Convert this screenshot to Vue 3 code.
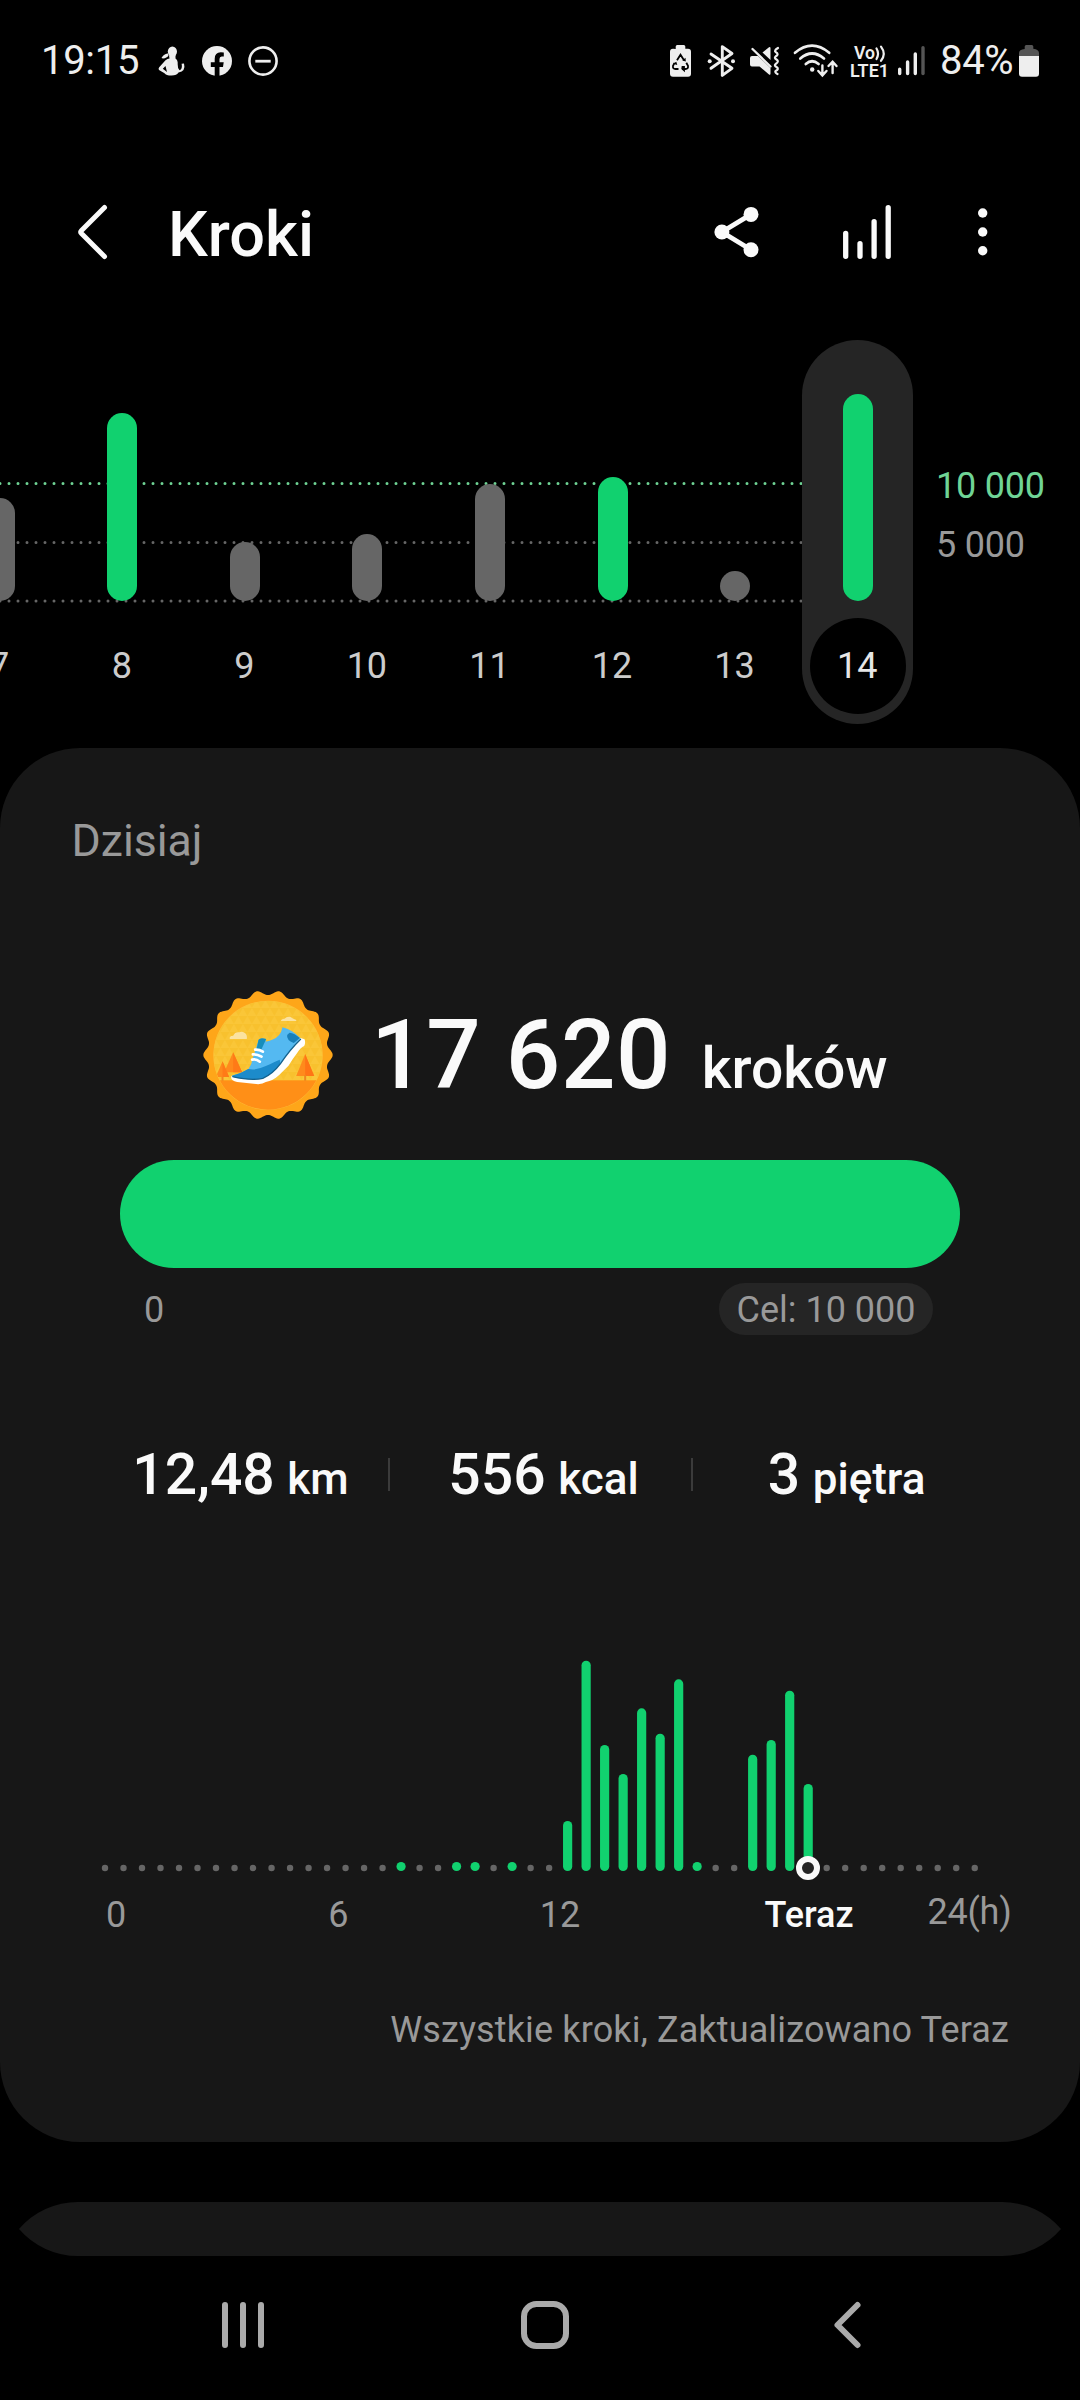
<script setup>
const days = [
  { label: '7', height: 103, goal: false },
  { label: '8', height: 188, goal: true },
  { label: '9', height: 59, goal: false },
  { label: '10', height: 67, goal: false },
  { label: '11', height: 117, goal: false },
  { label: '12', height: 124, goal: true },
  { label: '13', height: 30, goal: false },
  { label: '14', height: 207, goal: true, selected: true },
]

// Half-hour slots with recorded steps: slot index -> bar height
const activity = {
  16: 9, 19: 9, 20: 9, 22: 9, 25: 50, 26: 210.3, 27: 126, 28: 97, 29: 162.7,
  30: 137.3, 31: 191.7, 32: 9, 35: 116.3, 36: 131, 37: 180.3, 38: 87,
}
const slots = Array.from({ length: 48 }, (_, i) => ({
  x: 105 + i * 18.505,
  height: activity[i] || 0,
}))

// Badge outline with 18 rounded teeth
const sealPath = (() => {
  const pts = []
  for (let i = 0; i < 360; i++) {
    const a = (i * Math.PI) / 180
    const r = 180 + 14 * Math.pow((1 + Math.cos(18 * a)) / 2, 1.15)
    pts.push(`${(264.5 + r * Math.cos(a)).toFixed(1)} ${(285 + r * Math.sin(a)).toFixed(1)}`)
  }
  return 'M' + pts.join('L') + 'Z'
})()
</script>

<template>
  <div class="screen">
    <header class="status">
      <span class="clock">19:15</span>
      <svg class="ic person" width="28" height="34" viewBox="157 44 28 34">
        <ellipse cx="172.4" cy="51.6" rx="4.6" ry="5.2" />
        <path d="M168.2 53.5c-2 .1-4.600.9-6.700 4.600l1.500.5c2.400-.4 4.500-1.100 5.500-3z" />
        <path fill-rule="evenodd" d="M169 55.500L175.500 55L175.500 58.500Q178 60 177.700 64.500Q177.600 68.500 179.500 70.300Q182.800 69 181.600 63.700L184 63.400Q186 71 178.500 72.500Q177 75.500 171.500 75.500Q166 75.500 164.500 73.200L159 70Q158 68.800 159.200 67.200L165.500 60.300Q167.500 58.500 169.500 58.500ZM162.800 68.700L167 72L165.500 65.900Z" />
      </svg>
      <svg class="ic fb" width="32" height="34" viewBox="201 44 32 34">
        <circle cx="217" cy="61" r="15" />
        <path fill="#000" d="M214.700 76.200V67H210.800V62.200H214.700V58.700Q214.700 52.300 220.800 52.200Q222.500 52.200 223.800 52.500V56.500H221.700Q219.500 56.500 219.500 59V62.200H223.700L223 67H219.500V76.200Z" />
      </svg>
      <svg class="ic dnd" width="32" height="34" viewBox="247 44 32 34">
        <circle cx="263" cy="61" r="13.600" fill="none" stroke="#eee" stroke-width="2.600" />
        <rect x="255.300" y="59.800" width="15.400" height="2.800" />
      </svg>
      <span class="spacer"></span>
      <svg class="ic" width="270" height="34" viewBox="669 44 270 34">
        <!-- battery protection -->
        <path d="M675.700 49V46.500Q675.700 45 677.200 45H683.800Q685.300 45 685.300 46.500V48.700H688Q691 48.700 691 51.700V73.700Q691 76.700 688 76.700H673Q670 76.700 670 73.700V51.700Q670 48.700 673 48.700Z" />
        <g fill="none" stroke="#000" stroke-width="1.800">
          <path d="M677 60.300L680.500 54.800L684 60.300M674.600 62.800L673 65.800Q672.500 69 675.500 69H678.500M686.300 62.800L688 65.800Q688.500 69 685.500 69H682" />
        </g>
        <path fill="#000" d="M681.700 66l3.200 0v6.200l-3.600-3.100zM673 63.700l3.300-1.900 1 3.300zM685.500 57.700l.3 3.700-3.500-1z" />
        <!-- bluetooth -->
        <g fill="none" stroke="#eee" stroke-width="2.900" stroke-linecap="round" stroke-linejoin="round">
          <path d="M711 54L732 68.300L722.300 75.400V46.600L732 53.500L711 68.300" />
        </g>
        <circle cx="709.700" cy="61.200" r="2" />
        <circle cx="733" cy="61.200" r="2" />
        <!-- muted with vibration -->
        <path d="M750 58Q750 56 752 56H758L770.500 68V73.500Q770.500 75.500 768.700 74.200L759.500 66.500H752Q750 66.500 750 64.500Z" />
        <path d="M762.500 52.500L769 47.300Q770.500 46.500 770.500 48.500V60Z" />
        <path d="M752.500 49L770.500 66.500" stroke="#eee" stroke-width="2.300" stroke-linecap="round" />
        <path d="M778 48Q773.800 50.500 775.600 52Q779.600 54 775.600 56.500Q773.800 58 776.500 59.500Q779.600 61.500 775.600 64Q773.800 65.500 776.500 67Q779.600 69 775.600 71Q774.500 72.500 777.500 74" fill="none" stroke="#eee" stroke-width="2.200" stroke-linecap="round" />
        <!-- wifi -->
        <g fill="none" stroke="#eee" stroke-width="2.700" stroke-linecap="round">
          <path d="M795 52.800Q812 38.600 829.200 52.800" />
          <path d="M800.300 58.500Q812 48.500 824 58.500" />
          <path d="M805.800 64Q812 58.500 818.600 64" />
          <path d="M822.400 65.500V75M818.300 71L822.400 75.400L826.500 71M832.600 73V62M828.500 66L832.600 61.700L836.500 66" stroke-width="2.400" />
        </g>
        <circle cx="812.200" cy="69.500" r="2.200" />
        <!-- VoLTE -->
        <text x="854" y="59.300" font-size="18" font-weight="600" textLength="21" lengthAdjust="spacingAndGlyphs">Vo</text>
        <path d="M876.500 48.500Q879.500 53.500 876.500 59M881 46.700Q886.500 54 881 60.800" fill="none" stroke="#eee" stroke-width="2.200" stroke-linecap="round" />
        <text x="850" y="76.600" font-size="18" font-weight="600" textLength="39" lengthAdjust="spacingAndGlyphs">LTE1</text>
        <!-- signal -->
        <g stroke="#eee" stroke-width="3.400" stroke-linecap="round">
          <path d="M899.700 69.300V73.500M907.600 62V73.500M915.300 54V73.500" />
          <path d="M923 47.700V73.500" stroke="#555" />
        </g>
      </svg>
      <span class="percent">84%</span>
      <svg class="ic" width="22" height="34" viewBox="1018 44 22 34">
        <path fill="#555" d="M1024.700 49V46.500Q1024.700 45 1026.200 45H1031.800Q1033.300 45 1033.300 46.500V48.700Q1039 49.500 1039 53V56H1019V53Q1019 49.500 1024.700 49Z" />
        <path d="M1019 56H1039V73.700Q1039 76.700 1036 76.700H1022Q1019 76.700 1019 73.700Z" />
      </svg>
    </header>

    <div class="appbar">
      <svg class="back" width="34" height="60" viewBox="75 202 34 60">
        <path d="M104.500 207.500L81.500 230.500Q80 232 81.500 233.500L104.500 256.500" />
      </svg>
      <h1>Kroki</h1>
      <span class="spacer"></span>
      <svg width="280" height="60" viewBox="710 202 280 60">
        <g fill="#fafafa">
          <path d="M751 214.400L721.900 232L751 249.700" fill="none" stroke="#fafafa" stroke-width="4.800" />
          <circle cx="721.900" cy="232" r="7.500" /><circle cx="751" cy="214.400" r="7.500" /><circle cx="751" cy="249.700" r="7.500" />
          <circle cx="982.700" cy="213" r="4.700" /><circle cx="982.700" cy="232" r="4.700" /><circle cx="982.700" cy="250.700" r="4.700" />
        </g>
        <path d="M845.700 233.300V256.300M860 243.700V256.300M874.100 221.700V256.300M888.200 207.700V256.300" stroke="#fafafa" stroke-width="5.300" stroke-linecap="round" />
      </svg>
    </div>

    <section class="week">
      <svg class="grid" width="802" height="384" viewBox="0 340 802 384">
        <path class="goal" d="M0 483.500H802" />
        <path d="M0 542.500H802M0 601H802" />
      </svg>
      <div v-for="d in days" :key="d.label" class="day" :class="{ selected: d.selected }">
        <div class="plot">
          <div class="bar" :class="{ reached: d.goal }" :style="{ height: d.height + 'px' }"></div>
        </div>
        <span class="num">{{ d.label }}</span>
      </div>
      <div class="axis">
        <span class="target">10 000</span>
        <span>5 000</span>
      </div>
    </section>

    <main class="card">
      <h2>Dzisiaj</h2>
      <div class="hero">
        <svg width="130" height="130" viewBox="69.500 90 390 390">
          <defs>
            <clipPath id="disc"><circle cx="264.500" cy="286" r="163" /></clipPath>
            <pattern id="tri" width="27" height="48" patternUnits="userSpaceOnUse">
              <path d="M0 0H27L13.500 24ZM-13.500 24H13.500L0 48ZM13.500 24H40.500L27 48Z" fill="#f5b91f" opacity=".4" />
            </pattern>
          </defs>
          <path :d="sealPath" fill="#fea619" />
          <circle cx="264.500" cy="286" r="164" fill="#fdbe3c" />
          <g clip-path="url(#disc)">
            <rect x="95" y="115" width="340" height="250" fill="#fac638" />
            <rect x="95" y="115" width="340" height="250" fill="url(#tri)" />
            <rect x="95" y="361" width="340" height="100" fill="#ff8f17" />
            <path d="M128 304L148 351H108ZM160 277L187 337H133Z" fill="#ff8a1c" />
            <path d="M160 277L187 337H160ZM128 304L148 351H128Z" fill="#ff7a17" />
            <path d="M376 282L403 348H349Z" fill="#ff8a1c" />
            <path d="M376 282L403 348H376Z" fill="#ff7415" />
            <path d="M376 345V362M128 350V362" stroke="#f0861e" stroke-width="6" />
            <path d="M150 237Q147 228 160 227Q166 215 178 217Q186 213 194 218Q203 223 201 237Z" fill="#fbe2a0" />
            <path d="M303 183Q304 177 314 176Q319 169 331 170Q339 175 342 177Q350 178 350 183Z" fill="#fbe2a0" />
          </g>
          <path d="M155 348Q150 360 172 366L235 373Q249 371 258 366Q280 362 298 345L326 317Q338 297 352 279Q362 263 373 258Q378 247 374 238L360 233L280 330Z" fill="#fff" />
          <path d="M158 346Q186 340 206 327Q216 314 218 298L236 241Q242 232 259 237L257 244Q262 246 277 239Q302 232 308 202Q336 208 362 235Q338 260 322 283L302 310Q278 342 249 354Q213 362 158 350Z" fill="#54b9f1" />
          <path d="M157 347Q185 340 205 327Q229 332 256 319Q287 304 300 299L301 312Q278 343 249 355Q213 363 157 350Z" fill="#1c8bcb" />
          <path d="M329 218Q344 219 360 234L342 249Q319 240 322 225Z" fill="#197fb9" />
          <path d="M236 239Q242 231 259 237L245 268L230 269Z" fill="#178dbb" />
          <path d="M158 350Q214 363 249 355Q279 342 302 311Q330 269 363 237" fill="none" stroke="#12618e" stroke-width="4" />
          <path d="M226 269Q238 268 249 275M219 283Q232 282 245 290M217 299Q229 296 240 305" fill="none" stroke="#fff" stroke-width="8" stroke-linecap="round" />
        </svg>
        <p class="count">17 620 <span>kroków</span></p>
      </div>
      <div class="progress"></div>
      <div class="range">
        <span>0</span>
        <span class="pill">Cel: 10 000</span>
      </div>
      <div class="stats">
        <p class="distance">12,48 <span>km</span></p>
        <i></i>
        <p class="energy">556 <span>kcal</span></p>
        <i></i>
        <p class="floors">3 <span>piętra</span></p>
      </div>
      <svg class="hours" width="1080" height="310" viewBox="0 1640 1080 310">
        <template v-for="(s, i) in slots" :key="i">
          <rect v-if="s.height" :x="s.x - 4.600" :y="1871 - s.height" width="9.200" :height="s.height" rx="4.600" fill="#11d16f" />
          <circle v-else :cx="s.x" cy="1868" r="3.200" fill="#666" />
        </template>
        <circle cx="808" cy="1868" r="9" fill="#252525" stroke="#fafafa" stroke-width="6" />
        <g fill="#999" font-size="36" text-anchor="middle">
          <text x="116" y="1927">0</text>
          <text x="338.300" y="1927">6</text>
          <text x="560" y="1927">12</text>
          <text x="809" y="1927" fill="#fafafa" font-weight="500">Teraz</text>
          <text x="969.500" y="1924" letter-spacing="-0.200">24(h)</text>
        </g>
      </svg>
      <p class="note">Wszystkie kroki, Zaktualizowano Teraz</p>
    </main>

    <svg class="next" width="1080" height="54" viewBox="0 2202 1080 54">
      <path d="M19 2229A78 78 0 0 1 78 2202H1002A78 78 0 0 1 1061 2229A78 78 0 0 1 1002 2256H78A78 78 0 0 1 19 2229Z" fill="#171717" />
    </svg>

    <nav>
      <svg width="42" height="52" viewBox="222 2299 42 52"><path d="M225 2305V2345M243 2305V2345M261 2305V2345" /></svg>
      <svg width="54" height="54" viewBox="520 2298 54 54"><rect x="524" y="2304" width="42" height="42" rx="12.500" /></svg>
      <svg width="34" height="52" viewBox="830 2299 34 52"><path d="M857.500 2305L837.500 2325L857.500 2345" /></svg>
    </nav>
  </div>
</template>

<style>
body {
  margin: 0;
  background: #000;
}
</style>

<style scoped>
.screen {
  width: 1080px;
  height: 2400px;
  overflow: hidden;
  background: #000;
  color: #fafafa;
  font-family: Roboto, "Noto Sans", sans-serif;
}
svg {
  display: block;
  flex: none;
  overflow: visible;
}
h1, h2, p {
  margin: 0;
  white-space: nowrap;
}
.spacer {
  flex: 1;
}

.status {
  display: flex;
  align-items: center;
  box-sizing: border-box;
  height: 122px;
  padding: 0 40px 0 41px;
  font-size: 40px;
  line-height: 46px;
  color: #eee;
}
.clock, .percent {
  padding-bottom: 1px;
  letter-spacing: -0.300px;
}
.clock {
  width: 116px;
}
.ic {
  fill: #eee;
}
.fb {
  margin-left: 16px;
}
.dnd {
  margin-left: 14px;
}
.percent {
  width: 79px;
  text-indent: 1px;
}

.appbar {
  display: flex;
  align-items: center;
  box-sizing: border-box;
  height: 218px;
  padding: 2px 90px 0 75px;
}
.back {
  fill: none;
  stroke: #fafafa;
  stroke-width: 5px;
  stroke-linecap: round;
}
h1 {
  margin-left: 59px;
  padding-top: 5px;
  font-size: 63px;
  line-height: 74px;
  font-weight: 500;
}

.week {
  position: relative;
  display: flex;
  height: 408px;
  margin-left: -61.600px;
  font-size: 36px;
}
.grid {
  position: absolute;
  left: 61.600px;
  top: 0;
  fill: none;
  stroke: #666;
  stroke-width: 3px;
  stroke-linecap: round;
  stroke-dasharray: 0 9;
}
.grid .goal {
  stroke: #6fd495;
}
.day {
  position: relative;
  flex: none;
  display: flex;
  flex-direction: column;
  align-items: center;
  width: 122.570px;
  height: 384px;
}
.plot {
  display: flex;
  align-items: flex-end;
  height: 261px;
}
.bar {
  width: 30px;
  border-radius: 15px;
  background: #666;
}
.bar.reached {
  background: #11d16f;
}
.num {
  width: 96px;
  height: 96px;
  margin-top: 16.500px;
  border-radius: 50%;
  line-height: 97.500px;
  text-align: center;
  text-indent: -1px;
  color: #ccc;
}
.selected {
  width: 111px;
  margin: 0 5.800px;
  border-radius: 55.500px;
  background: #252525;
}
.selected .num {
  background: #000;
  color: #e6e6e6;
}
.axis {
  display: flex;
  flex-direction: column;
  margin-left: 17px;
  padding-top: 117px;
  line-height: 59px;
  letter-spacing: -0.200px;
  color: #999;
  white-space: nowrap;
}
.target {
  color: #6fd495;
}

.card {
  box-sizing: border-box;
  height: 1394px;
  padding-top: 63px;
  border-radius: 80px;
  background: #171717;
}
h2 {
  margin-left: 71.500px;
  font-size: 44.600px;
  line-height: 60px;
  font-weight: 400;
  color: #999;
}
.hero {
  display: flex;
  align-items: center;
  gap: 38px;
  height: 130px;
  margin: 119px 0 0 203px;
}
.count {
  font-size: 96px;
  line-height: 112px;
  font-weight: 500;
  letter-spacing: 0.600px;
}
.count span {
  margin-left: 6px;
  font-size: 57px;
  line-height: 0;
  letter-spacing: 0;
}
.progress {
  height: 108px;
  margin: 40px 120px 0;
  border-radius: 54px;
  background: #11d16f;
}
.range {
  display: flex;
  justify-content: space-between;
  margin: 15px 147px 0 144px;
  font-size: 36px;
  line-height: 50px;
  color: #999;
}
.range span {
  padding: 2px 0 0;
}
.range .pill {
  width: 214px;
  border-radius: 26px;
  background: #252525;
  text-align: center;
}
.stats {
  display: flex;
  align-items: center;
  height: 60px;
  margin: 109.500px 80px 0 93px;
  font-size: 57px;
  line-height: 60px;
  font-weight: 500;
}
.stats p {
  box-sizing: border-box;
  text-align: center;
}
.distance {
  width: 295px;
}
.energy {
  width: 301px;
  padding-left: 6px;
}
.floors {
  width: 307px;
}
.stats span {
  margin-left: -1.500px;
  font-size: 44px;
  line-height: 0;
}
.stats i {
  width: 2px;
  height: 33px;
  background: #3b3b3b;
}
.hours {
  margin-top: 135.500px;
}
.note {
  margin: 56px 71px 0 0;
  font-size: 36px;
  line-height: 48px;
  letter-spacing: 0.140px;
  text-align: right;
  color: #999;
}
.next {
  margin-top: 60px;
}

nav {
  display: flex;
  align-items: center;
  justify-content: space-between;
  box-sizing: border-box;
  height: 138px;
  padding: 0 216px 0 222px;
}
nav svg {
  fill: none;
  stroke: #aaa;
  stroke-width: 6px;
  stroke-linecap: round;
  stroke-linejoin: round;
}
</style>
